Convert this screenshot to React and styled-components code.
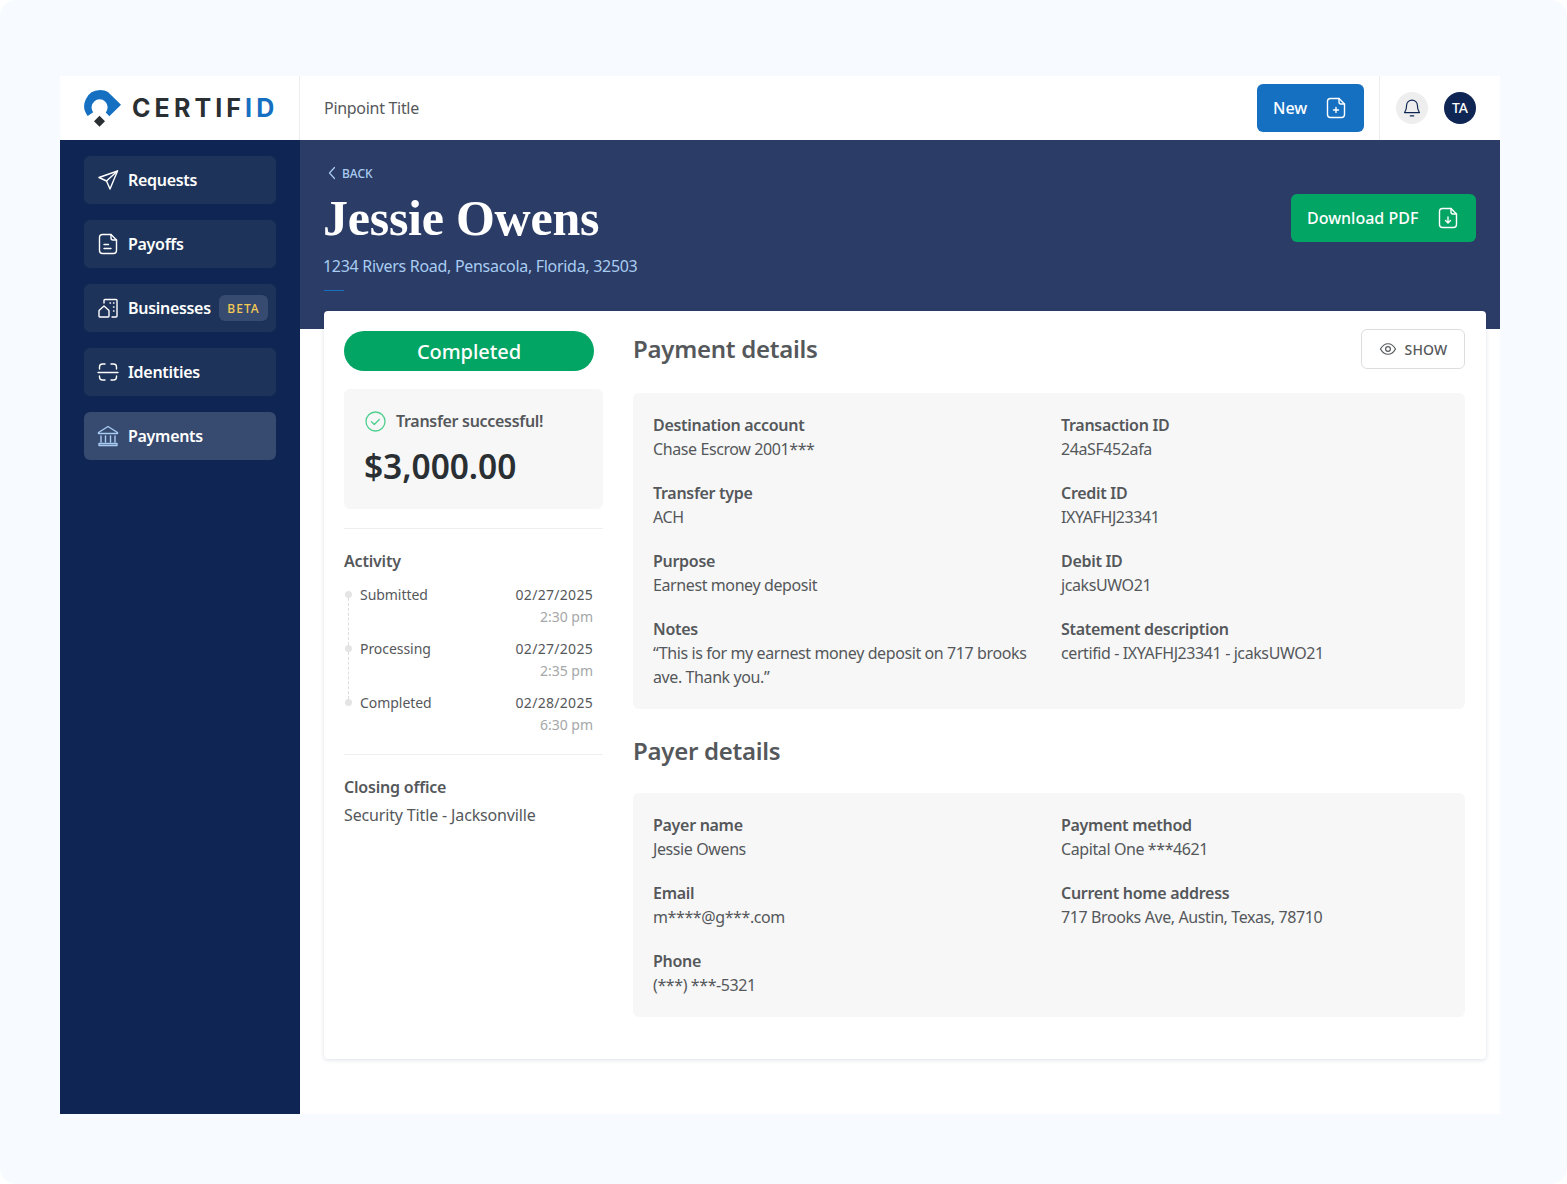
import React from "react";
import styled, { createGlobalStyle } from "styled-components";

const GlobalStyle = createGlobalStyle`
  html, body {
    margin: 0;
    padding: 0;
    background: #fff;
  }
  * {
    box-sizing: border-box;
  }
  body {
    font-family: "Noto Sans", "Open Sans", sans-serif;
    color: #55585b;
    letter-spacing: -0.3px;
  }
`;

const Page = styled.div`
  width: 1567px;
  height: 1184px;
  padding: 76px 67px 70px 60px;
  background: #f7faff;
  border-radius: 16px;
`;

const Frame = styled.div`
  width: 1440px;
  height: 1038px;
  background: #fff;
  display: grid;
  grid-template-columns: 240px 1fr;
  grid-template-rows: 64px 1fr;
`;

const LogoCell = styled.div`
  display: flex;
  align-items: center;
  gap: 11px;
  padding-left: 24px;
  border-right: 1px solid #eeeeee;
`;

const LogoText = styled.span`
  font-family: "Inter", sans-serif;
  font-size: 25px;
  font-weight: 700;
  letter-spacing: 4.1px;
  color: #2a2f33;
  & > b {
    color: #1570c2;
    font-weight: 700;
  }
`;

const TopBar = styled.header`
  display: flex;
  align-items: center;
  padding-left: 24px;
`;

const OrgName = styled.div`
  flex: 1;
  font-size: 16px;
  color: #55585b;
`;

const NewButton = styled.button`
  display: flex;
  align-items: center;
  justify-content: space-between;
  height: 48px;
  width: 107px;
  padding: 0 16px;
  border: 0;
  border-radius: 6px;
  background: ${(p) => p.$bg || "#1570c2"};
  color: #fff;
  font: 500 16px "Noto Sans", sans-serif;
`;

const TopActions = styled.div`
  display: flex;
  align-items: center;
  gap: 16px;
  height: 64px;
  margin-left: 15px;
  padding: 0 24px 0 16px;
  border-left: 1px solid #eeeeee;
`;

const BellCircle = styled.div`
  width: 32px;
  height: 32px;
  border-radius: 50%;
  background: #eeeeee;
  display: flex;
  align-items: center;
  justify-content: center;
`;

const Avatar = styled.div`
  width: 32px;
  height: 32px;
  padding-bottom: 2px;
  border-radius: 50%;
  background: #0f2654;
  color: #fff;
  font-size: 14px;
  font-weight: 500;
  letter-spacing: 0;
  display: flex;
  align-items: center;
  justify-content: center;
`;

const Sidebar = styled.nav`
  background: #0f2654;
  padding: 16px 24px;
  display: flex;
  flex-direction: column;
  gap: 16px;
`;

const NavItem = styled.div`
  height: 48px;
  border-radius: 6px;
  background: ${(p) => (p.$active ? "#374a70" : "#1e3359")};
  color: #fff;
  display: flex;
  align-items: center;
  gap: 8px;
  padding-left: 12px;
  font-size: 16px;
  font-weight: 600;
  letter-spacing: -0.3px;
  position: relative;
`;

const NavIcon = styled.svg`
  width: ${(p) => p.$size || 24}px;
  height: ${(p) => p.$size || 24}px;
  flex: none;
  fill: none;
  stroke: ${(p) => p.$color || "#fff"};
  stroke-width: 1.4;
  stroke-linecap: round;
  stroke-linejoin: round;
`;

const BetaTag = styled.span`
  position: absolute;
  right: 8px;
  top: 11px;
  width: 49px;
  height: 26px;
  border-radius: 6px;
  background: #374a70;
  color: #f5cb53;
  font-size: 12px;
  font-weight: 500;
  letter-spacing: 1px;
  display: flex;
  align-items: center;
  justify-content: center;
`;

const Main = styled.main`
  display: flex;
  flex-direction: column;
`;

const Hero = styled.section`
  height: 189px;
  background: #2b3c66;
  padding: 23px 24px 0 23px;
  display: flex;
  justify-content: space-between;
`;

const BackLink = styled.div`
  display: flex;
  align-items: center;
  gap: 5px;
  height: 20px;
  color: #a9cdf2;
  font-size: 12px;
  font-weight: 500;
  letter-spacing: 0;
  padding-left: 4px;
`;

const Title = styled.h1`
  margin: 5px 0 0;
  font-family: "Liberation Serif", serif;
  font-size: 50px;
  line-height: 60px;
  font-weight: 700;
  color: #fff;
  letter-spacing: -0.25px;
`;

const Address = styled.div`
  margin-top: 6px;
  font-size: 16px;
  line-height: 24px;
  color: #a9cdf2;
`;

const HeroRule = styled.div`
  width: 20px;
  height: 1px;
  margin: 12px 0 0 1px;
  background: #1570c2;
`;

const DownloadButton = styled(NewButton)`
  width: 185px;
  margin-top: 31px;
`;

const Card = styled.section`
  margin: -18px 14px 0 24px;
  height: 748px;
  padding: 20px 21px 0 20px;
  background: #fff;
  border-radius: 4px;
  box-shadow: 0 1px 4px rgba(15, 38, 84, 0.14);
  display: grid;
  grid-template-columns: 259px 832px;
  column-gap: 30px;
  position: relative;
`;

const StatusPill = styled.div`
  width: 250px;
  height: 40px;
  border-radius: 20px;
  background: #03a564;
  color: #fff;
  font-size: 20px;
  font-weight: 500;
  letter-spacing: -0.05px;
  display: flex;
  align-items: center;
  justify-content: center;
`;

const TransferBox = styled.div`
  margin-top: 18px;
  height: 120px;
  padding: 20px 20px 0;
  border-radius: 6px;
  background: #f7f7f7;
`;

const TransferRow = styled.div`
  display: flex;
  align-items: center;
  gap: 9px;
  font-size: 16px;
  font-weight: 600;
  color: #55585b;
  line-height: 24px;
`;

const Amount = styled.div`
  margin-top: 11px;
  font-size: 33.5px;
  line-height: 44px;
  font-weight: 600;
  letter-spacing: -0.05px;
  color: #2a2f33;
`;

const Divider = styled.div`
  height: 1px;
  background: #eeeeee;
  margin-top: ${(p) => p.$top}px;
`;

const SideHeading = styled.div`
  margin-top: ${(p) => p.$top}px;
  font-size: 16px;
  font-weight: 600;
  line-height: 24px;
  letter-spacing: -0.2px;
  color: #55585b;
`;

const Timeline = styled.div`
  margin-top: 11px;
  padding-right: 10px;
  position: relative;
`;

const TimelineRow = styled.div`
  display: flex;
  justify-content: space-between;
  height: 54px;
  padding-left: 16px;
  position: relative;
  font-size: 14px;
  line-height: 22px;
  letter-spacing: -0.05px;
  color: #55585b;
  &::before {
    content: "";
    position: absolute;
    left: 0.5px;
    top: 7px;
    width: 7px;
    height: 7px;
    border-radius: 50%;
    background: #e4e4e4;
  }
  &:not(:last-child)::after {
    content: "";
    position: absolute;
    left: 3.5px;
    top: 14px;
    height: 47px;
    border-left: 1px dashed #dddddd;
  }
`;

const TimeCol = styled.div`
  text-align: right;
  letter-spacing: 0.3px;
  & > span {
    display: block;
    letter-spacing: 0;
    color: #a5a7a9;
  }
`;

const SideValue = styled.div`
  margin-top: 4px;
  font-size: 16px;
  line-height: 24px;
  letter-spacing: -0.15px;
  color: #55585b;
`;

const SectionHead = styled.div`
  display: flex;
  align-items: center;
  justify-content: space-between;
  height: 34px;
  margin-top: ${(p) => p.$top || 0}px;
  margin-bottom: ${(p) => p.$bottom || 0}px;
`;

const SectionTitle = styled.h2`
  margin: 0;
  font-size: 24px;
  font-weight: 600;
  letter-spacing: -0.27px;
  color: #55585b;
`;

const ShowButton = styled.button`
  width: 104px;
  height: 40px;
  margin-top: 2px;
  display: flex;
  align-items: center;
  justify-content: center;
  gap: 8px;
  background: #fff;
  border: 1px solid #dddddd;
  border-radius: 6px;
  color: #55585b;
  font: 500 14px "Noto Sans", sans-serif;
  letter-spacing: 0.15px;
`;

const Panel = styled.div`
  background: #f7f7f7;
  border-radius: 6px;
  padding: 20px;
  display: grid;
  grid-template-columns: 408px 1fr;
  row-gap: 20px;
`;

const Field = styled.div`
  font-size: 16px;
  line-height: 24px;
  color: #55585b;
  letter-spacing: -0.4px;
  padding-right: 24px;
  & > strong {
    display: block;
    font-weight: 600;
    letter-spacing: -0.3px;
  }
`;

const paymentFields = [
  ["Destination account", "Chase Escrow 2001***"],
  ["Transaction ID", "24aSF452afa"],
  ["Transfer type", "ACH"],
  ["Credit ID", "IXYAFHJ23341"],
  ["Purpose", "Earnest money deposit"],
  ["Debit ID", "jcaksUWO21"],
  ["Notes", "“This is for my earnest money deposit on 717 brooks ave. Thank you.”"],
  ["Statement description", "certifid - IXYAFHJ23341 - jcaksUWO21"],
];

const payerFields = [
  ["Payer name", "Jessie Owens"],
  ["Payment method", "Capital One ***4621"],
  ["Email", "m****@g***.com"],
  ["Current home address", "717 Brooks Ave, Austin, Texas, 78710"],
  ["Phone", "(***) ***-5321"],
];

const activity = [
  ["Submitted", "02/27/2025", "2:30 pm"],
  ["Processing", "02/27/2025", "2:35 pm"],
  ["Completed", "02/28/2025", "6:30 pm"],
];

const Logo = () => (
  <svg width="37" height="37" viewBox="0 0 37 37">
    <path
      d="M3.700 25.900 A16 16 0 0 1 16 0 C19 0 22 0.800 24.200 2.200 L37 14.800 L25.300 26.300 L21.800 22.400 A8 8 0 1 0 9.200 22.200 Z"
      fill="#1570c2"
    />
    <path d="M15.500 25.800 L21 31.300 L15.500 36.800 L10 31.300 Z" fill="#2a2f33" />
  </svg>
);

const FileIcon = ({ children }) => (
  <NavIcon viewBox="0 0 24 24">
    <path d="M15 2.500H6.500a3 3 0 0 0-3 3v13a3 3 0 0 0 3 3h11a3 3 0 0 0 3-3V8z" />
    <path d="M15 2.500V6a2 2 0 0 0 2 2h3.500" />
    {children}
  </NavIcon>
);

export default function App() {
  return (
    <Page>
      <GlobalStyle />
      <Frame>
        <LogoCell>
          <Logo />
          <LogoText>
            CERTIF<b>ID</b>
          </LogoText>
        </LogoCell>
        <TopBar>
          <OrgName>Pinpoint Title</OrgName>
          <NewButton>
            New
            <FileIcon>
              <path d="M12 11.500v5M9.500 14h5" />
            </FileIcon>
          </NewButton>
          <TopActions>
            <BellCircle>
              <NavIcon viewBox="0 0 24 24" $color="#0f2654" $size={20}>
                <path d="M12 2.500a6.500 6.500 0 0 0-6.500 6.500c0 5-1.500 6.500-2.500 8.500h18c-1-2-2.500-3.500-2.500-8.500A6.500 6.500 0 0 0 12 2.500z" />
                <path d="M10 21.500h4" />
              </NavIcon>
            </BellCircle>
            <Avatar>TA</Avatar>
          </TopActions>
        </TopBar>

        <Sidebar>
          <NavItem>
            <NavIcon viewBox="0 0 24 24">
              <path d="M21.500 3 3 9.500l7.500 3.500 3.500 8z" />
              <path d="M10.500 13 21.500 3" />
            </NavIcon>
            Requests
          </NavItem>
          <NavItem>
            <FileIcon>
              <path d="M8 12.500h4.500M8 16.500h7" />
            </FileIcon>
            Payoffs
          </NavItem>
          <NavItem>
            <NavIcon viewBox="0 0 24 24">
              <path d="M3 14.500 8 10l5 4.500V20a1 1 0 0 1-1 1H4a1 1 0 0 1-1-1z" />
              <path d="M8 7V4.500a1 1 0 0 1 1-1h11a1 1 0 0 1 1 1V20a1 1 0 0 1-1 1h-4" />
              <path d="M14 7h.5M17.500 7h.5M17.500 11h.5M17.500 15h.5" />
            </NavIcon>
            Businesses
            <BetaTag>BETA</BetaTag>
          </NavItem>
          <NavItem>
            <NavIcon viewBox="0 0 24 24">
              <path d="M3.500 9V7a3 3 0 0 1 3-3H9M15 4h2.500a3 3 0 0 1 3 3v2" />
              <path d="M2 12.500h20" />
              <path d="M3.500 16v1a3 3 0 0 0 3 3H9M15 20h2.500a3 3 0 0 0 3-3v-1" />
            </NavIcon>
            Identities
          </NavItem>
          <NavItem $active>
            <NavIcon viewBox="0 0 24 24" $color="#a9cdf2">
              <path d="M12 2.500 2.500 8.500v1h19v-1z" />
              <path d="M5 12v6M9.500 12v6M14.500 12v6M19 12v6" />
              <path d="M3 19.500h18v2H3z" />
            </NavIcon>
            Payments
          </NavItem>
        </Sidebar>

        <Main>
          <Hero>
            <div>
              <BackLink>
                <svg width="10" height="14" viewBox="0 0 10 14" fill="none" stroke="#a9cdf2" strokeWidth="1.200" strokeLinecap="round" strokeLinejoin="round">
                  <path d="M7.500 1.500 2.500 7l5 5.500" />
                </svg>
                BACK
              </BackLink>
              <Title>Jessie Owens</Title>
              <Address>1234 Rivers Road, Pensacola, Florida, 32503</Address>
              <HeroRule />
            </div>
            <DownloadButton $bg="#03a564">
              Download PDF
              <FileIcon>
                <path d="M12 11v5.500M9.500 14.500l2.500 2.500 2.500-2.500" />
              </FileIcon>
            </DownloadButton>
          </Hero>

          <Card>
            <div>
              <StatusPill>Completed</StatusPill>
              <TransferBox>
                <TransferRow>
                  <svg width="23" height="23" viewBox="0 0 23 23" fill="none" stroke="#4fd08f" strokeWidth="1.300" strokeLinecap="round" strokeLinejoin="round">
                    <circle cx="11.500" cy="11.500" r="9.500" />
                    <path d="M7.500 11.800l2.800 2.700 5-5" />
                  </svg>
                  Transfer successful!
                </TransferRow>
                <Amount>$3,000.00</Amount>
              </TransferBox>
              <Divider $top={19} />
              <SideHeading $top={20}>Activity</SideHeading>
              <Timeline>
                {activity.map(([label, date, time]) => (
                  <TimelineRow key={label}>
                    {label}
                    <TimeCol>
                      {date}
                      <span>{time}</span>
                    </TimeCol>
                  </TimelineRow>
                ))}
              </Timeline>
              <Divider $top={8} />
              <SideHeading $top={20}>Closing office</SideHeading>
              <SideValue>Security Title - Jacksonville</SideValue>
            </div>

            <div>
              <SectionHead $bottom={28}>
                <SectionTitle>Payment details</SectionTitle>
                <ShowButton>
                  <svg width="18" height="18" viewBox="0 0 24 24" fill="none" stroke="#55585b" strokeWidth="1.600" strokeLinecap="round" strokeLinejoin="round">
                    <path d="M2 12c2.500-4.500 6-7 10-7s7.500 2.500 10 7c-2.500 4.500-6 7-10 7s-7.500-2.500-10-7z" />
                    <circle cx="12" cy="12" r="3.200" />
                  </svg>
                  SHOW
                </ShowButton>
              </SectionHead>
              <Panel>
                {paymentFields.map(([label, value]) => (
                  <Field key={label}>
                    <strong>{label}</strong>
                    {value}
                  </Field>
                ))}
              </Panel>
              <SectionHead $top={24} $bottom={26}>
                <SectionTitle>Payer details</SectionTitle>
              </SectionHead>
              <Panel>
                {payerFields.map(([label, value]) => (
                  <Field key={label}>
                    <strong>{label}</strong>
                    {value}
                  </Field>
                ))}
              </Panel>
            </div>
          </Card>
        </Main>
      </Frame>
    </Page>
  );
}
